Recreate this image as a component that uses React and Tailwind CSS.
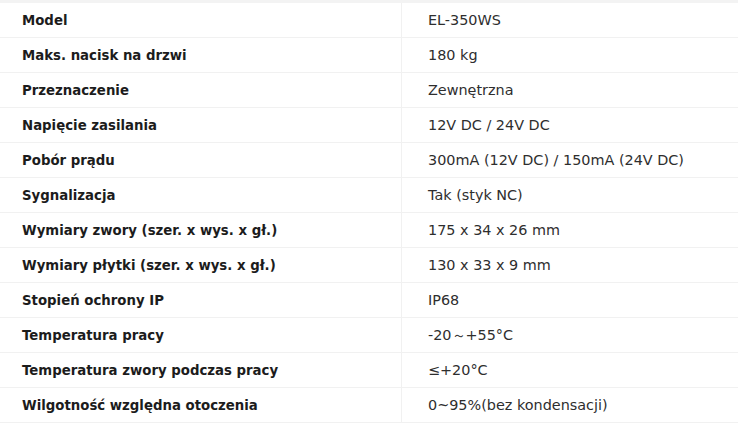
import React from "react";

const rows = [
  ["Model", "EL-350WS"],
  ["Maks. nacisk na drzwi", "180 kg"],
  ["Przeznaczenie", "Zewnętrzna"],
  ["Napięcie zasilania", "12V DC / 24V DC"],
  ["Pobór prądu", "300mA (12V DC) / 150mA (24V DC)"],
  ["Sygnalizacja", "Tak (styk NC)"],
  ["Wymiary zwory (szer. x wys. x gł.)", "175 x 34 x 26 mm"],
  ["Wymiary płytki (szer. x wys. x gł.)", "130 x 33 x 9 mm"],
  ["Stopień ochrony IP", "IP68"],
  ["Temperatura pracy", "-20～+55°C"],
  ["Temperatura zwory podczas pracy", "≤+20°C"],
  ["Wilgotność względna otoczenia", "0~95%(bez kondensacji)"],
];

export default function App() {
  return (
    <div className="w-[738px] h-[423px] bg-white overflow-hidden border-t-[3px] border-[#f3f3f3] font-['DejaVu_Sans',sans-serif]">
      {rows.map(([label, value], i) => (
        <div key={i} className="grid grid-cols-[402px_1fr] h-[35px] border-b border-[#f1f1f1]">
          <div className="flex items-center pl-[22px] pt-[2px] border-r border-[#f1f1f1] text-[13.3px] font-bold text-[#1c1c1c]">
            {label}
          </div>
          <div className="flex items-center pl-[26px] pt-[2px] text-[14.4px] text-[#2e2e2e]">
            {value}
          </div>
        </div>
      ))}
    </div>
  );
}
